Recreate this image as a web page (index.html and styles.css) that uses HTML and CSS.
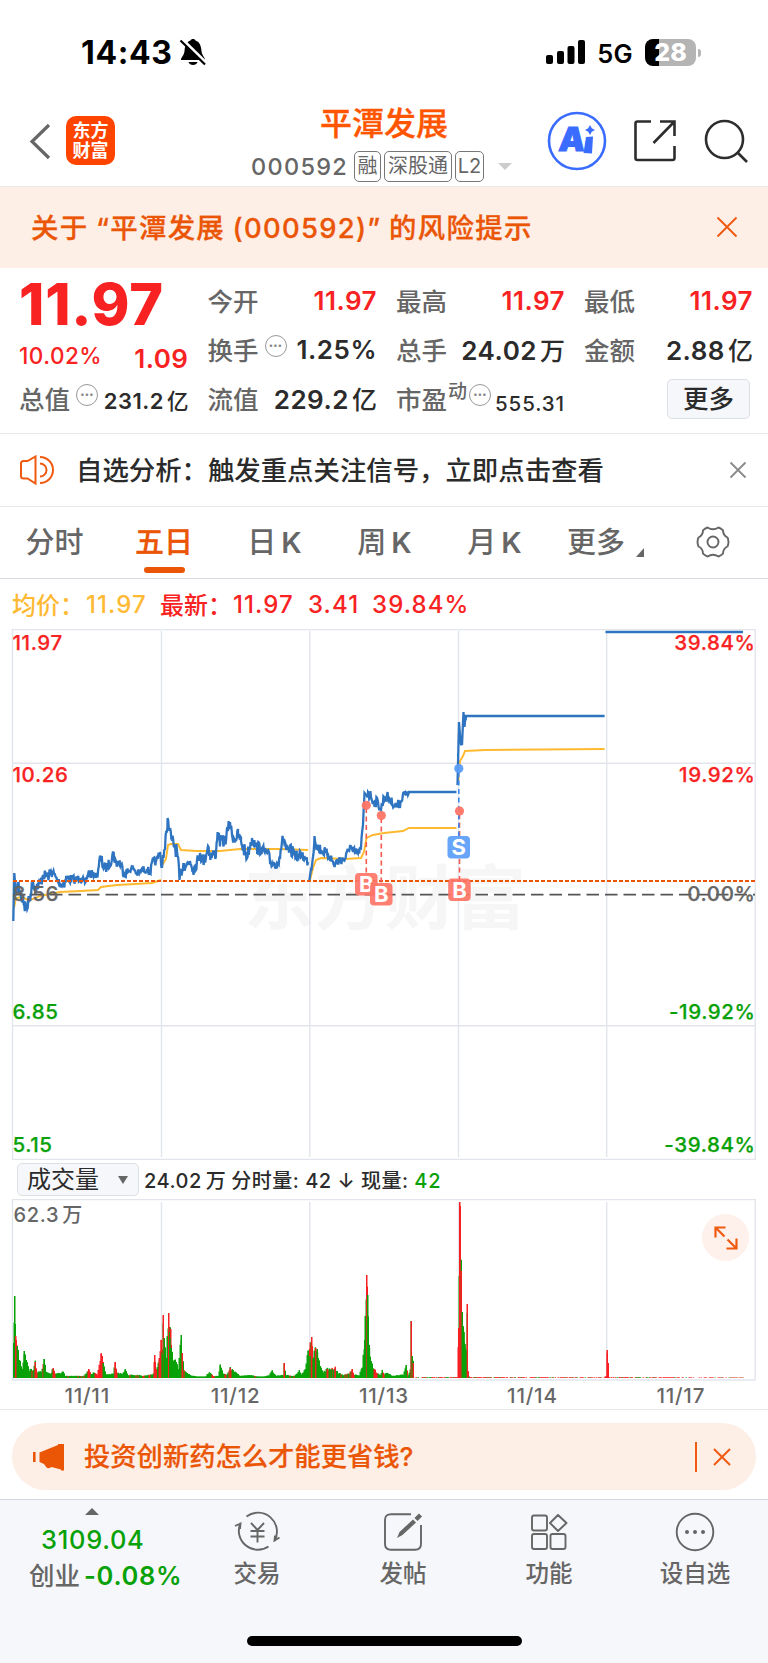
FILE: index.html
```html
<!DOCTYPE html>
<html lang="zh-CN">
<head>
    <meta charset="UTF-8">
    <title>平潭发展 000592</title>
    <link rel="stylesheet" href="styles.css">
</head>
<body>
    <div class="status-bar">
        <div class="status-left">
            <span class="time">14:43</span>
            <svg width="28" height="28" viewBox="0 0 28 28">
                <path d="M2 22 C2 19 5 18 5.5 13 C6 7 8 3.500 11.500 2.500 C12 0.500 16 0.500 16.500 2.500 C21 4 22 8 22.500 13 C23 18 26 19 26 22 Z" fill="#000"/>
                <path d="M9.500 24 H18.500 C17.500 28 10.500 28 9.500 24 Z" fill="#000"/>
                <path d="M2.500 0.500 L27.500 25" stroke="#fff" stroke-width="3"/>
                <path d="M1.500 2.500 L26 26.500" stroke="#000" stroke-width="2.200"/>
            </svg>
        </div>
        <div class="status-right">
            <svg width="40" height="25" viewBox="0 0 40 25">
                <rect x="0" y="15" width="7" height="9" rx="2"/>
                <rect x="11" y="11" width="7" height="13" rx="2"/>
                <rect x="21.500" y="6" width="7" height="18" rx="2"/>
                <rect x="32" y="0" width="7" height="24" rx="2"/>
            </svg>
            <span class="network">5G</span>
            <span class="battery">28</span>
        </div>
    </div>

    <div class="header">
        <div class="header-left">
            <svg width="22" height="38" viewBox="0 0 22 38"><path d="M20 3 L3 19.500 L20 36" fill="none" stroke="#666" stroke-width="3.200"/></svg>
            <div class="logo"><span>东方</span><span>财富</span></div>
        </div>
        <div class="header-center">
            <h1>平潭发展</h1>
            <div class="code-row">
                <span class="code">000592</span>
                <span class="tag tag-one">融</span>
                <span class="tag tag-three">深股通</span>
                <span class="tag tag-level">L2</span>
                <span class="caret-down"></span>
            </div>
        </div>
        <div class="header-right">
            <svg width="60" height="60" viewBox="0 0 60 60">
                <circle cx="30" cy="30" r="28" fill="none" stroke="#3a6cff" stroke-width="2.600"/>
                <text class="ai-text" x="11" y="40.500" transform="skewX(-5) translate(3.500 0)">A</text>
                <path d="M39 26 L46 25.500 L45 42.500 L36.500 42 Z" fill="#3a6cff"/>
                <path d="M43 14 L44.800 17.200 L48 19 L44.800 20.800 L43 24 L41.200 20.800 L38 19 L41.200 17.200 Z" fill="#3a6cff"/>
            </svg>
            <svg class="share" width="44" height="44" viewBox="0 0 44 44" fill="none" stroke="#2d2d2d" stroke-width="2.600">
                <path d="M18 2.500 H4.500 Q2.500 2.500 2.500 4.500 V39 Q2.500 41 4.500 41 H39.500 Q41.500 41 41.500 39 V27"/>
                <path d="M27 2.500 H41.500 V17 M41 3 L20.500 24"/>
            </svg>
            <svg class="search" width="44" height="44" viewBox="0 0 44 44" fill="none" stroke="#2d2d2d" stroke-width="2.600">
                <circle cx="20.500" cy="20.500" r="18.500"/>
                <path d="M33 33 L43 43"/>
            </svg>
        </div>
    </div>

    <div class="notice">
        <span>关于 “平潭发展 (000592)” 的风险提示</span>
        <svg width="22" height="22" viewBox="0 0 22 22"><path d="M1.500 1.500 L20.500 20.500 M20.500 1.500 L1.500 20.500" stroke="#f05a10" stroke-width="1.900"/></svg>
    </div>

    <div class="quote">
        <div class="cell price">11.97</div>
        <div class="cell"><label>今开</label><b class="up">11.97</b></div>
        <div class="cell"><label>最高</label><b class="up">11.97</b></div>
        <div class="cell"><label>最低</label><b class="up">11.97</b></div>

        <div class="cell change"><b class="up percent">10.02%</b><b class="up">1.09</b></div>
        <div class="cell"><label>换手</label><i class="more-dot">•••</i><b>1.25%</b></div>
        <div class="cell"><label>总手</label><b>24.02<em>万</em></b></div>
        <div class="cell"><label>金额</label><b>2.88<em>亿</em></b></div>

        <div class="cell"><label>总值</label><i class="more-dot">•••</i><b class="small">231.2<em>亿</em></b></div>
        <div class="cell"><label>流值</label><b>229.2<em>亿</em></b></div>
        <div class="cell"><label>市盈</label><sup>动</sup><i class="more-dot tight">•••</i><b class="tiny">555.31</b></div>
        <div class="cell cell-more"><button>更多</button></div>
    </div>

    <div class="analysis">
        <svg width="34" height="30" viewBox="0 0 34 30" fill="none" stroke="#f05a10" stroke-width="2">
            <path d="M15.500 1.500 V28.500 L7.500 23.500 H3.500 Q1 23.500 1 21 V8.500 Q1 6 3.500 6 H7.500 Z"/>
            <path d="M20 8.500 A6.500 6.500 0 0 1 20 21.500 M20 2 A13 13 0 0 1 20 28"/>
        </svg>
        <span>自选分析：触发重点关注信号，立即点击查看</span>
        <svg width="18" height="18" viewBox="0 0 18 18"><path d="M1.500 1.500 L16.500 16.500 M16.500 1.500 L1.500 16.500" stroke="#8a8a8a" stroke-width="1.800"/></svg>
    </div>

    <div class="tabs">
        <span class="tab">分时</span>
        <span class="tab active">五日</span>
        <span class="tab">日<small>K</small></span>
        <span class="tab">周<small>K</small></span>
        <span class="tab">月<small>K</small></span>
        <span class="tab tab-more">更多<i></i></span>
        <span class="tab tab-set">
            <svg width="34" height="32" viewBox="0 0 34 32" fill="none" stroke="#666" stroke-width="1.900" stroke-linejoin="round">
                <path d="M11.500 1.500 Q17 5 22.500 1.500 Q25 2.300 27 4.300 Q27 9.500 31.500 11.500 Q33.500 16 31.500 20.500 Q27 22.500 27 27.700 Q25 29.700 22.500 30.500 Q17 27 11.500 30.500 Q9 29.700 7 27.700 Q7 22.500 2.500 20.500 Q0.500 16 2.500 11.500 Q7 9.500 7 4.300 Q9 2.300 11.500 1.500 Z"/>
                <circle cx="17" cy="16" r="5.500"/>
            </svg>
        </span>
    </div>

    <div class="legend">
        <span class="avg">均价：</span><span class="avg n1">11.97</span><span class="cur">最新：</span><span class="n2">11.97</span><span class="n3">3.41</span><span class="n4">39.84%</span>
    </div>

    <svg class="chart" width="768" height="531" viewBox="0 629 768 531">
        <text class="watermark" x="244" y="924" textLength="282" lengthAdjust="spacingAndGlyphs">东方财富</text>
        <g class="grid">
            <path d="M12.500 629.500 H755.200 V1159.500 H12.500 Z"/>
            <path d="M161.500 631 V1157 M309.800 631 V1157 M458.500 631 V1157 M606.700 631 V1157"/>
            <path d="M13 763.300 H755 M13 1025.700 H755"/>
        </g>
        <g id="avgLines"></g>
        <g id="priceLines"></g>
        <path class="last-line" d="M13 881 H755"/>
        <path class="base-line" d="M13 894.700 H755"/>
        <g class="axis">
            <text class="up" x="12.500" y="650">11.97</text>
            <text class="up" x="12.500" y="782">10.26</text>
            <text class="flat" x="12.500" y="901">8.56</text>
            <text class="down" x="12.500" y="1019">6.85</text>
            <text class="down" x="12.500" y="1152">5.15</text>
            <g text-anchor="end">
                <text class="up" x="755.500" y="650">39.84%</text>
                <text class="up" x="755.500" y="782">19.92%</text>
                <text class="flat" x="755.500" y="901">0.00%</text>
                <text class="down" x="755.500" y="1019">-19.92%</text>
                <text class="down" x="755.500" y="1152">-39.84%</text>
            </g>
        </g>
        <g class="marks">
            <path class="buy-line" d="M366.300 808 V873 M381.300 818 V883 M459.500 814 V836 M459.500 859 V880"/>
            <path class="sell-line" d="M458.800 772 V836"/>
            <circle class="buy" cx="366.300" cy="805.300" r="4.600"/>
            <circle class="buy" cx="381.300" cy="815.500" r="4.600"/>
            <circle class="buy" cx="459.500" cy="811" r="4.600"/>
            <circle class="sell" cx="458.800" cy="768.500" r="4.600"/>
            <g class="sell"><rect x="447.500" y="836" width="22.500" height="22.500" rx="4"/><text x="458.800" y="855">S</text></g>
            <g class="buy"><rect x="355" y="873" width="22.500" height="22.500" rx="4"/><text x="366.300" y="892">B</text></g>
            <g class="buy"><rect x="370" y="883" width="22.500" height="22.500" rx="4"/><text x="381.300" y="902">B</text></g>
            <g class="buy"><rect x="448.200" y="878.500" width="22.500" height="22.500" rx="4"/><text x="459.500" y="897.500">B</text></g>
        </g>
    </svg>

    <div class="volume-bar">
        <button>成交量<i></i></button>
        <span>24.02<em>万</em></span>
        <span>分时量: 42 ↓ 现量: <b class="down">42</b></span>
    </div>

    <div class="volume">
        <svg width="768" height="182" viewBox="0 1199 768 182">
            <g class="grid">
                <path d="M12.500 1199.600 H755.200 V1380 H12.500 Z"/>
                <path d="M161.500 1202 V1378 M309.800 1202 V1378 M458.500 1202 V1378 M606.700 1202 V1378"/>
            </g>
            <g id="bars"></g>
            <text class="max-vol" x="13.500" y="1221.500">62.3<tspan dx="3">万</tspan></text>
        </svg>
        <div class="expand">
            <svg width="26" height="26" viewBox="0 0 26 26" fill="none" stroke="#f05a10" stroke-width="2.200">
                <path d="M2.500 12.500 V2.500 H12.500 M3 3 L11.500 11.500 M23.500 13.500 V23.500 H13.500 M23 23 L14.500 14.500"/>
            </svg>
        </div>
    </div>

    <div class="dates">
        <span>11/11</span><span>11/12</span><span>11/13</span><span>11/14</span><span>11/17</span>
    </div>

    <div class="promo">
        <svg width="32" height="28" viewBox="0 0 32 28" fill="#eb5506">
            <path d="M0 9 H2.600 V19 H0 Z M6.500 9.500 L25 2 V1 H31 V27.500 H28 V26.500 L18.500 24 Q16 26 13.500 24.500 L11 21 L6.500 19 Z"/>
        </svg>
        <span>投资创新药怎么才能更省钱?</span>
        <i class="bar"></i>
        <svg width="18" height="18" viewBox="0 0 18 18"><path d="M1 1 L17 17 M17 1 L1 17" stroke="#f05a10" stroke-width="2"/></svg>
    </div>

    <div class="bottom">
        <div class="index">
            <i></i>
            <div class="value">3109.04</div>
            <div class="name">创业<b>-0.08%</b></div>
        </div>
        <div class="nav">
            <svg width="46" height="42" viewBox="0 0 46 42" fill="none" stroke="#666" stroke-width="1.900">
                <path d="M12.500 5.500 A19 19 0 0 1 40.500 30 M45.500 26.500 L40.500 29.500 L41 24.500"/>
                <path d="M34.500 35.500 A19 19 0 0 1 6.500 12 M1 15 L6.500 12.500 L6 18"/>
                <path d="M17 12 L23.500 19 L30 12 M23.500 19 V31.500 M16.500 20 H30.500 M16.500 25.500 H30.500"/>
            </svg>
            <span>交易</span>
        </div>
        <div class="nav">
            <svg width="40" height="42" viewBox="0 0 40 42" fill="none" stroke="#666" stroke-width="1.900">
                <path d="M28 3.200 H8 Q2 3.200 2 9 V33 Q2 38.700 8 38.700 H32 Q38 38.700 38 33 V14"/>
                <path d="M14 27 L16.500 21 L30 8.500 L33 11.500 L19.500 24 Z" fill="#666" stroke="none"/>
                <path d="M33 8.500 L37.500 4" stroke-width="4.500"/>
            </svg>
            <span>发帖</span>
        </div>
        <div class="nav">
            <svg width="38" height="42" viewBox="0 0 38 42" fill="none" stroke="#666" stroke-width="1.900">
                <rect x="2" y="4.500" width="15" height="15" rx="2"/>
                <rect x="2" y="23" width="15" height="15" rx="2"/>
                <rect x="20.500" y="23" width="15" height="15" rx="2"/>
                <path d="M28 4 L36.500 12 L28 20 L20 12 Z" stroke-linejoin="round"/>
            </svg>
            <span>功能</span>
        </div>
        <div class="nav">
            <svg width="40" height="42" viewBox="0 0 40 42" fill="none" stroke="#666" stroke-width="1.900">
                <circle cx="20" cy="21" r="18.300"/>
                <path d="M12 21 h0.010 M20 21 h0.010 M28 21 h0.010" stroke-width="4" stroke-linecap="round"/>
            </svg>
            <span>设自选</span>
        </div>
        <div class="home-line"></div>
    </div>

    <script src="chart.js"></script>
</body>
</html>
```
FILE: styles.css
```css
* {
    box-sizing: border-box;
}

body {
    margin: 0;
    width: 768px;
    height: 1663px;
    overflow: hidden;
    background-color: #fff;
    color: #2b2b2b;
    font-family: Inter, "Noto Sans CJK SC", sans-serif;
    font-weight: 500;
}

svg {
    display: block;
    flex: none;
}

i, em {
    font-style: normal;
}

button {
    font-family: inherit;
    background-color: #f6f7fa;
    border: 1.5px solid #dcdfe4;
    border-radius: 5px;
    color: #2b2b2b;
}

.up {
    color: #f82222;
    fill: #f82222;
}

.down {
    color: #08a108;
    fill: #08a108;
}

/* phone status bar */
.status-bar {
    height: 100px;
    padding: 4px 67px 0 81px;
    display: flex;
    align-items: center;
    justify-content: space-between;
    color: #000;
}

.status-left, .status-right {
    display: flex;
    align-items: center;
}

.time {
    font-size: 32px;
    font-weight: 700;
    letter-spacing: 0.6px;
    margin-right: 7px;
}

.network {
    font-size: 25.5px;
    font-weight: 600;
    margin: 2px 12px 0 11px;
    letter-spacing: 0.3px;
}

.battery {
    position: relative;
    width: 51px;
    height: 27px;
    border-radius: 8px;
    background: linear-gradient(90deg, #000 28%, #b4b4b4 28%);
    color: #fff;
    font-size: 25px;
    font-weight: 800;
    line-height: 27px;
    text-align: center;
    margin-right: 5px;
}

.battery::after {
    content: "";
    position: absolute;
    right: -5px;
    top: 10px;
    width: 3px;
    height: 8px;
    border-radius: 0 3px 3px 0;
    background-color: #b4b4b4;
}

/* title bar */
.header {
    height: 87px;
    padding: 0 20px 0 29px;
    display: grid;
    grid-template-columns: 210px 1fr 203px;
    border-bottom: 1px solid #e8e8e8;
}

.header-left, .header-right {
    display: flex;
    align-items: center;
    height: 81px;
}

.logo {
    width: 49px;
    height: 49px;
    margin-left: 15px;
    border-radius: 10px;
    background-color: #ff4400;
    color: #fff;
    font-size: 18px;
    font-weight: 700;
    line-height: 20px;
    display: flex;
    flex-direction: column;
    align-items: center;
    justify-content: center;
}

.header-center {
    padding-left: 12px;
}

.header-center h1 {
    margin: 5px 0 0 69px;
    font-size: 32px;
    line-height: 38px;
    font-weight: 500;
    color: #ff5500;
    -webkit-text-stroke: 0.3px #ff5500;
}

.code-row {
    display: flex;
    align-items: center;
    height: 31px;
    margin-top: 8px;
}

.code {
    color: #666;
    font-size: 23.5px;
    letter-spacing: 1.3px;
    width: 103px;
}

.tag {
    height: 31px;
    border: 1.3px solid #777;
    border-radius: 5px;
    color: #666;
    font-size: 20px;
    font-weight: 400;
    line-height: 28px;
    text-align: center;
    flex: none;
    margin-right: 3px;
}

.tag-one {
    width: 27px;
}

.tag-three {
    width: 68px;
}

.tag-level {
    width: 29px;
}

.caret-down {
    margin-left: 11px;
    border: 7px solid transparent;
    border-top-color: #ccc;
    border-bottom: 0;
}

.header-right {
    padding-left: 2px;
}

.ai-text {
    font-size: 33px;
    font-weight: 900;
    fill: #3a6cff;
    stroke: #3a6cff;
    stroke-width: 1;
}

.share {
    margin-left: 26px;
}

.search {
    margin-left: 27px;
}

.notice {
    height: 81px;
    padding: 0 30px 2px 31px;
    display: flex;
    align-items: center;
    justify-content: space-between;
    background-color: #fdeee6;
    color: #eb5506;
    font-size: 27.4px;
    letter-spacing: 1.3px;
    word-spacing: -1px;
    -webkit-text-stroke: 0.3px #eb5506;
}

.notice span {
    margin-top: -2px;
}

/* quote numbers */
.quote {
    height: 166px;
    padding: 7px 16px 0 19px;
    display: grid;
    grid-template-columns: 168.5px 168.5px 168px 168px;
    grid-template-rows: repeat(3, 49px);
    column-gap: 20px;
    border-bottom: 1px solid #e8e8e8;
}

.cell {
    display: flex;
    align-items: center;
    white-space: nowrap;
}

.cell label {
    color: #666;
    font-size: 25.5px;
}

.cell b {
    margin: 1px -1px 0 auto;
    font-size: 26px;
    font-weight: 600;
    letter-spacing: 0.5px;
}

.cell em {
    font-size: 25px;
    font-weight: 500;
    margin-left: 3px;
    letter-spacing: 0;
}

.price {
    padding-top: 9px;
    color: #f82222;
    font-size: 57.5px;
    font-weight: 800;
    letter-spacing: 0.8px;
}

.change {
    padding-top: 18px;
}

.cell .percent {
    margin: -5px 0 0;
    font-size: 22.5px;
    font-weight: 500;
}

.more-dot {
    width: 22px;
    height: 22px;
    margin: -6px 0 0 6px;
    border: 1.5px solid #999;
    border-radius: 50%;
    color: #888;
    font-size: 8px;
    line-height: 19px;
    text-align: center;
    letter-spacing: 0.3px;
}

.more-dot.tight {
    margin-left: 2px;
}

.cell .small {
    font-size: 22px;
    margin-top: 4px;
}

.cell .small em {
    font-size: 21.5px;
}

.cell sup {
    color: #666;
    font-size: 19px;
    line-height: 20px;
    margin: -12px 0 0 1px;
}

.cell .tiny {
    font-size: 20.5px;
    font-weight: 500;
    letter-spacing: 0.9px;
    margin-top: 12px;
}

.cell-more {
    justify-content: flex-end;
}

.cell-more button {
    width: 83px;
    height: 40px;
    margin: 2px 2px 0 0;
    padding: 0;
    font-size: 25.5px;
    font-weight: 500;
    line-height: 36px;
}

.analysis {
    height: 73px;
    padding: 0 21px 0 20px;
    display: flex;
    align-items: center;
    border-bottom: 1px solid #e8e8e8;
    font-size: 26.4px;
}

.analysis span {
    flex: 1;
    margin: -4px 0 0 22px;
}

/* period tabs */
.tabs {
    height: 72px;
    padding: 0 20px 0 0;
    display: grid;
    grid-template-columns: 109px 110px 111px 109px 111px 111px 87px;
    border-bottom: 1px solid #d5d9e0;
    color: #666;
    font-size: 29px;
}

.tab {
    position: relative;
    height: 71px;
    line-height: 71px;
    text-align: center;
    white-space: nowrap;
}

.tab small {
    font-size: 29px;
    font-weight: 600;
    margin-left: 5px;
}

.tab.active {
    color: #eb5506;
    -webkit-text-stroke: 0.3px #eb5506;
}

.tab.active::after {
    content: "";
    position: absolute;
    left: 35px;
    bottom: 5px;
    width: 41px;
    height: 6px;
    border-radius: 3px;
    background-color: #eb5506;
}

.tab-more i {
    display: inline-block;
    margin-left: 11px;
    border-left: 8px solid transparent;
    border-bottom: 9px solid #666;
    vertical-align: -4px;
}

.tab-set {
    display: flex;
    align-items: center;
    justify-content: flex-end;
    padding: 0 18px 1px 0;
}

.legend {
    height: 50px;
    padding: 0 0 0 12px;
    display: flex;
    align-items: center;
    color: #f82222;
    font-size: 24px;
    white-space: nowrap;
}

.legend .avg, .legend .cur {
    margin-top: -1px;
}

.legend .avg {
    color: #ffb933;
}

.legend .n1 {
    width: 74px;
    margin: 0 0 0 2px;
}

.legend .n2 {
    width: 75px;
    margin-left: 1px;
}

.legend .n3 {
    width: 64px;
}

.legend .n1, .legend .n2, .legend .n3, .legend .n4 {
    letter-spacing: 1.1px;
}

/* charts */
.grid path {
    fill: none;
    stroke: #e2e6ec;
    stroke-width: 1.4;
}

.watermark {
    font-size: 70px;
    font-weight: 700;
    fill: #f6f6f6;
}

#avgLines path {
    fill: none;
    stroke: #ffb92e;
    stroke-width: 1.9;
}

#priceLines path {
    fill: none;
    stroke: #2f74c0;
    stroke-width: 2.3;
}

.last-line {
    fill: none;
    stroke: #eb5506;
    stroke-width: 2;
    stroke-dasharray: 4 2;
}

.base-line {
    fill: none;
    stroke: #555;
    stroke-width: 1.8;
    stroke-dasharray: 12.5 6;
}

.axis text {
    font-size: 20.5px;
    font-weight: 500;
    letter-spacing: 0.6px;
    stroke-width: 0.25px;
}

.flat {
    fill: #666;
}

.axis .up {
    stroke: #f82222;
}

.axis .down {
    stroke: #08a108;
}

.axis .flat {
    stroke: #666;
}

.buy {
    fill: #ff7466;
}

.sell {
    fill: #5a9dfa;
}

.marks circle {
    fill-opacity: 0.95;
}

.marks rect {
    fill-opacity: 0.92;
}

.marks text {
    fill: #fff;
    font-size: 22px;
    font-weight: 700;
    text-anchor: middle;
}

.buy-line, .sell-line {
    fill: none;
    stroke: #f5594f;
    stroke-width: 1.6;
    stroke-dasharray: 5 3.500;
}

.sell-line {
    stroke: #3c87f0;
}

.volume-bar {
    height: 39px;
    padding-left: 17px;
    display: flex;
    align-items: center;
    font-size: 20px;
    letter-spacing: 0.5px;
    white-space: nowrap;
}

.volume-bar button {
    width: 122px;
    height: 33px;
    margin-right: 5px;
    padding: 0 10px 0 9px;
    display: flex;
    align-items: center;
    justify-content: space-between;
    font-size: 24px;
    line-height: 28px;
}

.volume-bar button i {
    border: 5px solid transparent;
    border-top: 8px solid #666;
    border-bottom: 0;
}

.volume-bar span {
    margin: -1px 5px 0 0;
}

.volume-bar em {
    margin-left: 4px;
}

.volume-bar b {
    font-weight: 500;
    letter-spacing: 0.8px;
}

.volume {
    position: relative;
    height: 182px;
}

.max-vol {
    font-size: 20px;
    letter-spacing: 0.7px;
    fill: #666;
}

.expand {
    position: absolute;
    right: 19px;
    top: 15px;
    width: 47px;
    height: 47px;
    border-radius: 50%;
    background-color: #fef0ea;
    display: flex;
    align-items: center;
    justify-content: center;
}

.dates {
    height: 29px;
    padding: 0 13px;
    display: grid;
    grid-template-columns: repeat(5, 1fr);
    border-bottom: 1px solid #e8e8e8;
    color: #666;
    font-size: 20.5px;
    letter-spacing: 0.8px;
    line-height: 30px;
    text-align: center;
}

.promo {
    height: 67px;
    margin: 13px 12px 9px;
    padding: 0 25px 0 21px;
    display: flex;
    align-items: center;
    border-radius: 34px;
    background-color: #fdeee6;
    color: #eb5506;
    font-size: 26.3px;
    -webkit-text-stroke: 0.2px #eb5506;
}

.promo span {
    flex: 1;
    margin: -4px 0 0 19px;
}

.promo .bar {
    width: 2px;
    height: 30px;
    margin-right: 16px;
    background-color: #f05a10;
}

/* bottom navigation */
.bottom {
    position: relative;
    height: 165px;
    display: grid;
    grid-template-columns: 184px repeat(4, 146px);
    background-color: #f6f7fa;
    border-top: 1.5px solid #d5d8de;
    color: #666;
}

.index {
    padding-top: 8px;
    color: #08a108;
}

.index i {
    display: block;
    width: 14px;
    margin-left: 85px;
    border: 7px solid transparent;
    border-bottom-color: #666;
    border-top: 0;
}

.value {
    margin: 8px 0 0 41px;
    font-size: 25.5px;
    letter-spacing: 0.7px;
    line-height: 34px;
}

.name {
    margin-left: 29px;
    color: #666;
    font-size: 25.5px;
    line-height: 37px;
    white-space: nowrap;
}

.name b {
    margin-left: 4px;
    color: #08a108;
    font-weight: 600;
    letter-spacing: 0.7px;
}

.nav {
    padding-top: 11px;
    display: flex;
    flex-direction: column;
    align-items: center;
    font-size: 23.5px;
    line-height: 34px;
}

.nav span {
    margin-top: 4px;
}

.home-line {
    position: absolute;
    left: 247px;
    bottom: 18px;
    width: 275px;
    height: 10px;
    border-radius: 5px;
    background-color: #000;
}
```
FILE: chart.js
```js
const SVG = 'http://www.w3.org/2000/svg';

let seed = 7;
function random() {
    seed = (seed * 16807) % 2147483647;
    return seed / 2147483647;
}

// one list per trading day: x, y, wiggle
const prices = [
    [[13.3,921,0],[14.3,873,0],[16,895,5],[18,884,6],[21,897,6],[23,898,8],[26,909,6],[28,904,5],[30.5,895,4],[33,882,4],[35,888,4],[40,884,5],[43,875,4],[49,876,5],[52.3,871,3],[57,880,4],[62,885,5],[67,878,4],[74,880,3],[80,878,3],[85,883,3],[88.3,873,4],[92,874,2],[97,876,3],[100,858,5],[105,869,4],[110,863,4],[113.7,852,4],[115,863,4],[120,862,4],[124,873,4],[128,872,2],[133,867,3],[137,874,3],[143,870,3],[147,869,3],[150,873,3],[153,861,3],[156,862,3],[160,852,5],[161.7,868,0]],
    [[162,868,0],[163,855,6],[165,850,6],[167.6,818,2],[169,828,5],[172,841,6],[174,845,6],[177,852,6],[179.5,880,2],[181,869,7],[184,863,6],[187,865,6],[190,861,6],[194,868,5],[198,860,5],[200,853,5],[204,862,5],[208,846,6],[211,856,5],[216,853,5],[217.6,832,4],[220,842,5],[225,841,5],[230,822,4],[232,835,5],[235,839,5],[238,835,5],[241,841,5],[244,850,6],[247,856,5],[252,838,4],[256,847,5],[261,849,4],[267,853,5],[271,863,4],[277,864,4],[280,859,3],[282.5,836,4],[286,850,5],[293,852,4],[298,857,4],[302,854,4],[305,859,4],[308,862,1]],
    [[309.3,881,0],[311,869,4],[313,857,4],[314.5,836,4],[317,847,5],[321,850,4],[326,853,4],[330,856,4],[334,865,4],[339,860,4],[345,859,3],[350,846,4],[353,852,4],[358,853,3],[361,848,4],[363,825,2],[364.5,793,0],[366,795,5],[368,792,5],[371,797,4],[374,802,4],[378,802,4],[381,810,4],[384,797,4],[388,797,4],[392,803,3],[397,806,4],[401,802,3],[403.4,792,4],[405,795,3],[408,795,2],[409,792,0],[456.5,792,0]],
    [[457.5,785,0],[459,722,0],[460,735,5],[462,745,0],[463.5,712,0],[464.5,727,5],[466,716,0],[604.6,716,0]],
    [[605.5,632,0],[743,632,0]]
];

const averages = [
    [[14,908],[16,898],[22,897],[28,900],[33,899],[40,896],[60,892],[80,891],[98,890],[101,887],[117,885],[135,884],[152,883],[161,880]],
    [[161.7,866],[166,859],[168,845],[171,844],[178,844],[181,850],[197,851],[220,851],[240,849],[280,849],[308,850]],
    [[310,880],[313,868],[316,860],[321,858],[345,859],[361,858],[364,852],[366.500,838],[373,835],[384,833],[403,831],[409,828],[456.5,828]],
    [[458,785],[460,761],[463,756],[465,751],[485,750],[604.6,749]]
];

function addPath(parent, points) {
    const path = document.createElementNS(SVG, 'path');
    path.setAttribute('d', 'M' + points.map(p => p[0].toFixed(1) + ' ' + p[1].toFixed(1)).join(' L'));
    document.getElementById(parent).appendChild(path);
}

prices.forEach(day => {
    const points = [];
    for (let i = 0; i < day.length - 1; i++) {
        const [x1, y1, w1] = day[i];
        const [x2, y2] = day[i + 1];
        points.push([x1, y1]);
        if (!w1) continue;
        for (let x = x1 + 0.6; x < x2; x += 0.6) {
            const y = y1 + (y2 - y1) * (x - x1) / (x2 - x1);
            points.push([x, y + (random() * 2 - 1) * w1 * 1.3]);
        }
    }
    points.push(day[day.length - 1]);
    addPath('priceLines', points);
});

averages.forEach(day => addPath('avgLines', day));

// x, height, share of red bars
const volumes = [
    [13.5,35,0],[14.5,82,0],[15.5,42,1],[17,32,0],[19,18,0],[22,9,0.1],[24,27,0],[26,18,0],[29,8,0.3],[33,8,0.5],[35,16,1],[37,6,0],[41,6,0.8],[44,19,0.1],[46,7,0],[50,4,0.2],[53,10,0.9],[55,4,0.2],[60,5,0],[63,7,0],[65,2,0.2],[84,2,0.7],[88.500,9,1],[91,4,0.4],[94,6,1],[97,3,0.4],[101,24,1],[103,15,0.2],[106,4,0.1],[113,4,0.7],[115,16,0.8],[117,5,0],[122,4,0],[125,9,0],[128,3,0.3],[138,3,0],[142,2,0.6],[153,4,0.8],[154.5,23,1],[156,9,0.9],[159,20,1],[161,38,1],[162,26,0],[163,63,1],[164,40,0],[166,20,0],[168.5,65,1],[169.5,46,0],[170.5,49,1],[171,30,0],[173,17,0],[176,16,0],[178,9,0],[181,43,0],[182,25,1],[184,7,0],[188,4,0],[193,2,0],[205,1,0.4],[209,6,0.4],[213,2,0.5],[218,2,0],[220,12,0],[223,5,0.6],[226,3,0.1],[230,10,0.7],[233,7,0],[236,6,0.2],[240,2,0],[249,3,0.2],[262,1,0],[269,3,0.2],[272,7,0],[276,2,0],[283,3,0.3],[284,15,0.6],[285.5,3,0.2],[294,2,0],[299,7,0],[301,3,0.1],[305,9,0],[308,27,0.1],[309.5,29,1],[311.5,41,0.9],[313,20,0.3],[315.5,30,1],[317,29,0],[320,12,0],[323,6,0.1],[327,9,0.5],[331,9,0.4],[335,10,0.5],[338,5,0.2],[343,3,0.6],[349,5,0.8],[352,9,1],[354,3,0.1],[359,3,0.2],[362,10,0],[364.5,38,0.4],[366.5,103,1],[367.5,83,0],[369,33,0],[371,16,0],[374,9,0.5],[377,5,0.2],[380,3,0],[382,8,0.6],[384,4,0],[388,5,0],[392,2,0],[399,3,0],[403,3,0.3],[406,13,0.3],[408,3,0],[410,8,1],[411,57,1],[412,22,0],[413,15,1],[414,0.8,1],[457,0.8,1],[458.500,50,1],[459.5,176,1],[461,107,1],[462,66,0],[463.5,46,0],[464.5,34,0],[466,26,0.5],[467,74,1],[468,7,1],[469,1,1],[470,0.8,1],[604,0.6,1],[606,2,1],[607,28,1],[608,15,1],[609,0.8,1],[745,0.4,1]
];

function heightAt(x) {
    let i = 0;
    while (volumes[i + 1][0] < x) i++;
    const [x1, h1, r1] = volumes[i];
    const [x2, h2] = volumes[i + 1];
    const red = random() < r1;
    return [h1 + (h2 - h1) * (x - x1) / (x2 - x1), red];
}

function addBar(x, height, red) {
    const rect = document.createElementNS(SVG, 'rect');
    rect.setAttribute('x', x);
    rect.setAttribute('y', 1378 - height);
    rect.setAttribute('width', 1.5);
    rect.setAttribute('height', height);
    rect.setAttribute('fill', red ? '#f81f22' : '#08a108');
    document.getElementById('bars').appendChild(rect);
}

for (let x = 14; x < 744; x++) {
    const [h, red] = heightAt(x);
    const flat = h < 1;
    if (flat && random() < 0.3) continue;
    addBar(x - 0.5, flat ? h : Math.max(1.5, h * (0.85 + random() * 0.3)), red && random() < 0.8);
}

// peaks keep their own colour, a lower green body stands in front of the red ones
volumes.filter(v => v[1] > 8).forEach(v => addBar(v[0] - 0.5, v[1], v[2] > 0.45));
[[162,24],[164,30],[169.5,40],[170.5,30],[309.5,22],[313,20],[317,26],[367,60],[369,30],[463.5,46],[464.5,34],[465.5,28]].forEach(v => addBar(v[0] - 0.3, v[1], false));
```
